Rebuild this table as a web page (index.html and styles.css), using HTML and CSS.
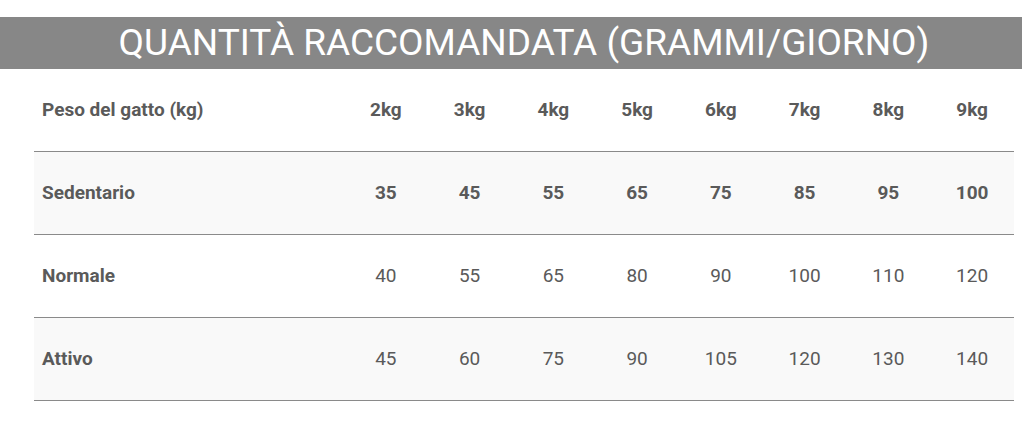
FILE: index.html
```html
<!DOCTYPE html>
<html lang="it">
<head>
<meta charset="utf-8">
<title>Quantità raccomandata</title>
<link rel="stylesheet" href="styles.css">
</head>
<body>
<h2 class="banner"><span class="banner-text">QUANTITÀ RACCOMANDATA (GRAMMI/GIORNO)</span></h2>
<div class="wrap">
<table class="feed">
  <colgroup><col class="c-label"><col span="8" class="c-num"></colgroup>
  <thead>
    <tr><th>Peso del gatto (kg)</th><th>2kg</th><th>3kg</th><th>4kg</th><th>5kg</th><th>6kg</th><th>7kg</th><th>8kg</th><th>9kg</th></tr>
  </thead>
  <tbody>
    <tr class="alt strong"><th>Sedentario</th><td>35</td><td>45</td><td>55</td><td>65</td><td>75</td><td>85</td><td>95</td><td>100</td></tr>
    <tr><th>Normale</th><td>40</td><td>55</td><td>65</td><td>80</td><td>90</td><td>100</td><td>110</td><td>120</td></tr>
    <tr class="alt"><th>Attivo</th><td>45</td><td>60</td><td>75</td><td>90</td><td>105</td><td>120</td><td>130</td><td>140</td></tr>
  </tbody>
</table>
</div>
</body>
</html>
```
FILE: styles.css
```css
html, body { margin: 0; padding: 0; background: #fff; }
body { font-family: Roboto, "Liberation Sans", Arial, sans-serif; color: #5a5a5a; }
.banner {
  margin: 17px 0 0 0;
  height: 52px;
  background: #878787;
  color: #fff;
  font-weight: 400;
  font-size: 37px;
  line-height: 52px;
  display: flex;
  justify-content: center;
  padding-left: 26px;
}
.wrap { padding: 0 8px 0 34px; }
.feed { width: 980px; border-collapse: collapse; table-layout: fixed; font-size: 19px; }
.c-label { width: 310px; }
.feed th, .feed td { height: 80px; padding: 0 4px 2px; text-align: center; vertical-align: middle; }
.feed th:first-child { text-align: left; padding-left: 8px; }
.feed th { font-weight: 700; }
.feed td { font-weight: 400; }
.feed tbody tr { border-top: 1px solid #8a8a8a; }
.feed tbody tr:last-child { border-bottom: 1px solid #8a8a8a; }
.feed tr.alt { background: #f9f9f9; }
.feed tr.strong td { font-weight: 700; }
```
